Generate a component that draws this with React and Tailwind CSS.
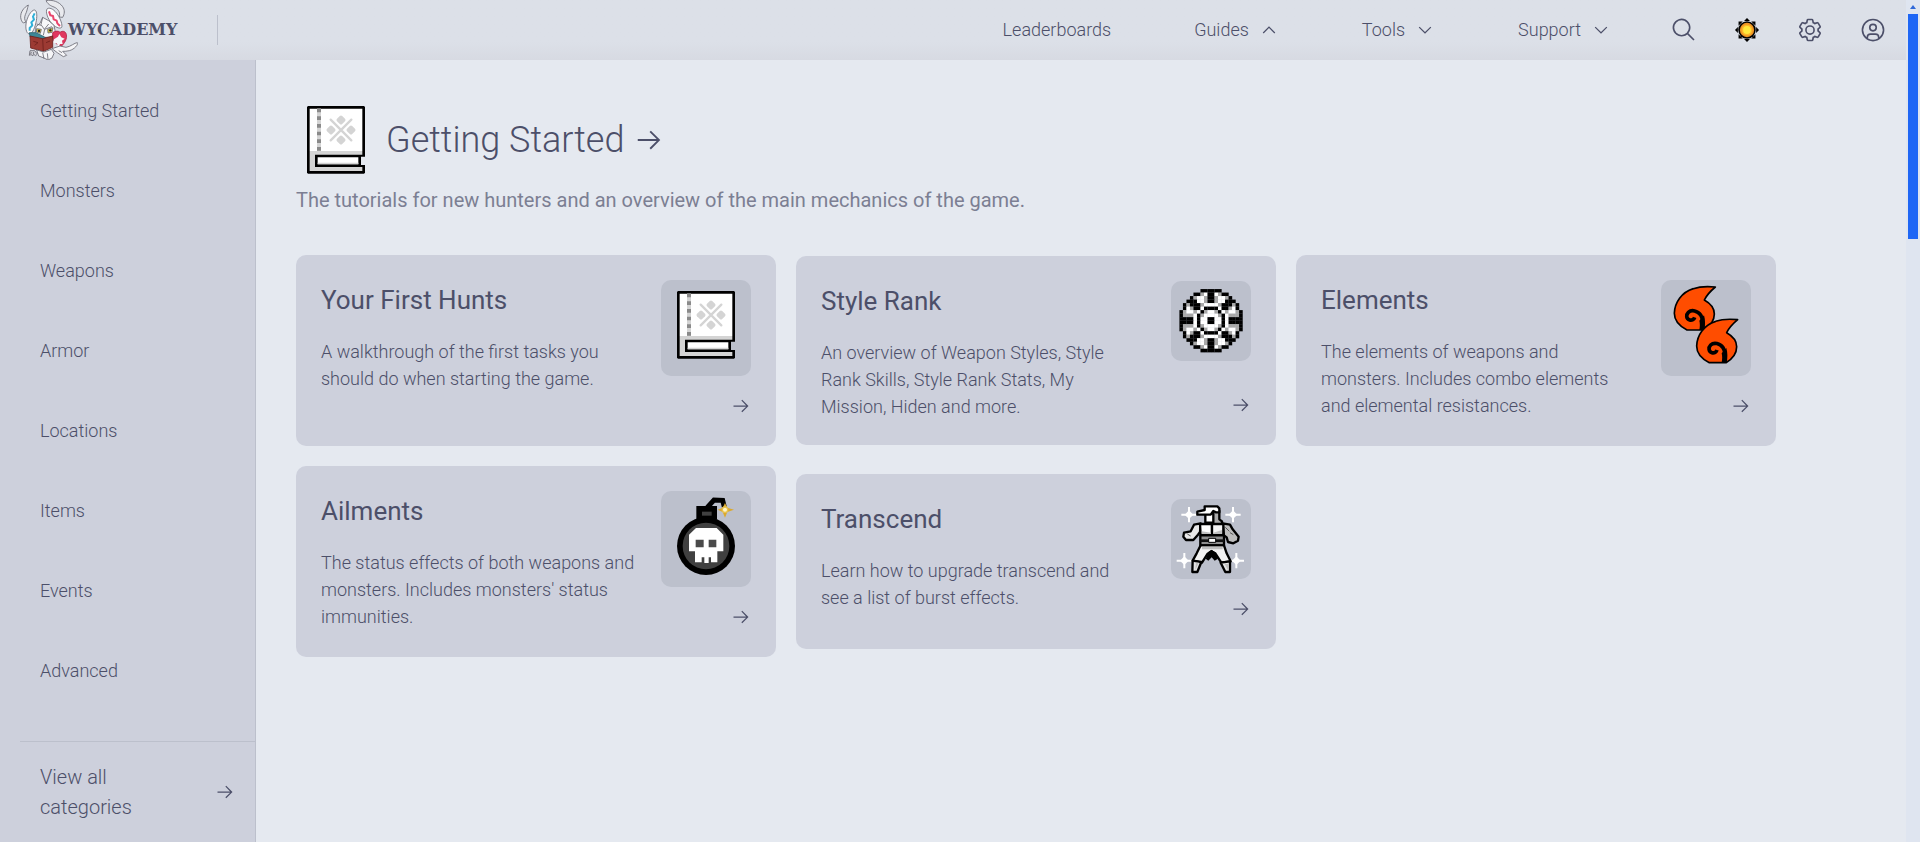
const ICON_PATHS = {
  arrow: ["M18 6 16.57 7.393 24.15 15 4 15 4 17 24.15 17 16.57 24.573 18 26 28 16 18 6z"],
  down: ["M16 22 6 12 7.4 10.6 16 19.2 24.6 10.6 26 12z"],
  up: ["M16 10 26 20 24.6 21.4 16 12.8 7.4 21.4 6 20z"],
  search: [
    "M29,27.5859l-7.5521-7.5521a11.0177,11.0177,0,1,0-1.4141,1.4141L27.5859,29ZM4,13a9,9,0,1,1,9,9A9.01,9.01,0,0,1,4,13Z",
  ],
  settings: [
    "M27,16.76c0-.25,0-.5,0-.76s0-.51,0-.77l1.92-1.68A2,2,0,0,0,29.3,11L26.94,7a2,2,0,0,0-1.73-1,2,2,0,0,0-.64.1l-2.43.82a11.35,11.35,0,0,0-1.31-.75l-.51-2.52a2,2,0,0,0-2-1.61H13.64a2,2,0,0,0-2,1.61l-.51,2.52a11.48,11.48,0,0,0-1.32.75L7.43,6.06A2,2,0,0,0,6.79,6,2,2,0,0,0,5.06,7L2.7,11a2,2,0,0,0,.41,2.51L5,15.24c0,.25,0,.5,0,.76s0,.51,0,.77L3.11,18.45A2,2,0,0,0,2.7,21L5.06,25a2,2,0,0,0,1.73,1,2,2,0,0,0,.64-.1l2.43-.82a11.35,11.35,0,0,0,1.31.75l.51,2.52a2,2,0,0,0,2,1.61h4.72a2,2,0,0,0,2-1.61l.51-2.52a11.48,11.48,0,0,0,1.32-.75l2.42.82a2,2,0,0,0,.64.1,2,2,0,0,0,1.73-1L29.3,21a2,2,0,0,0-.41-2.51ZM25.21,24l-3.43-1.16a8.86,8.86,0,0,1-2.71,1.57L18.36,28H13.64l-.71-3.55a9.36,9.36,0,0,1-2.7-1.57L6.79,24,4.43,20l2.72-2.4a8.9,8.9,0,0,1,0-3.13L4.43,12,6.79,8l3.43,1.16a8.86,8.86,0,0,1,2.71-1.57L13.64,4h4.72l.71,3.55a9.36,9.36,0,0,1,2.7,1.57L25.21,8,27.57,12l-2.72,2.4a8.9,8.9,0,0,1,0,3.13L27.57,20Z",
    "M16,22a6,6,0,1,1,6-6A5.94,5.94,0,0,1,16,22Zm0-10a3.91,3.91,0,0,0-4,4,3.91,3.91,0,0,0,4,4,3.91,3.91,0,0,0,4-4A3.91,3.91,0,0,0,16,12Z",
  ],
  user: [
    "M16,8a5,5,0,1,0,5,5A5,5,0,0,0,16,8Zm0,8a3,3,0,1,1,3-3A3.0034,3.0034,0,0,1,16,16Z",
    "M16,2A14,14,0,1,0,30,16,14.0158,14.0158,0,0,0,16,2ZM10,26.3765V25a3.0033,3.0033,0,0,1,3-3h6a3.0033,3.0033,0,0,1,3,3v1.3765a11.8989,11.8989,0,0,1-12,0Zm13.9925-1.4507A5.0016,5.0016,0,0,0,19,20H13a5.0016,5.0016,0,0,0-4.9925,4.9258,12,12,0,1,1,15.985,0Z",
  ],
};

function Icon({ name, className }) {
  return (
    <svg viewBox="0 0 32 32" fill="currentColor" aria-hidden="true" className={`shrink-0 ${className}`}>
      {ICON_PATHS[name].map((d) => (
        <path key={d} d={d} />
      ))}
    </svg>
  );
}

function SunIcon() {
  return (
    <svg viewBox="-40 -40 80 80" aria-hidden="true" className="size-[26px]">
      {[0, 90, 180, 270].map((a) => (
        <g key={a} transform={`rotate(${a})`}>
          <path d="M-9 -28 0 -37 9 -28z" />
          <path d="M13 -26h13v13z" />
        </g>
      ))}
      <circle r="27" />
      <circle r="22" fill="#ee9423" />
      <circle r="17" fill="#fbb52a" />
      <circle r="12" fill="#ffe93c" />
    </svg>
  );
}

function Logo() {
  return (
    <svg viewBox="30 0 174 180" aria-hidden="true" className="h-[60px] w-[58px] shrink-0" stroke="#6a6a74" strokeWidth="2.5" strokeLinejoin="round">
      <path fill="#e9eaee" d="M55 15C42 22 31 36 32 52c1 8 4 14 8 17l8-3c-5-6-5-14-2-22 5-10 6-18 9-29z" />
      <path fill="#e9eaee" d="M108 2c20-4 40 4 50 18 7 10 6 22 0 32l-10-1c3-12-2-22-12-28-10-5-20-6-28-21z" />
      <path fill="#fbfbfd" d="M74 30c6 2 8 14 5 32-3 18-11 38-19 40-9 1-14-12-12-30 2-19 16-43 26-42z" />
      <path fill="#fbfbfd" d="M112 26c9-5 22 4 31 18 9 13 15 32 12 38-6 6-21-1-31-13-11-13-19-36-12-43z" />
      <path fill="none" stroke="#2fb0d8" strokeWidth="6" d="M74 40l-5 10 3 9-8 8 3 9-8 8v8" />
      <path fill="none" stroke="#e8456c" strokeWidth="6" d="M117 34l4 12 8 2 2 10 9 4 2 8 8 8" />
      <path fill="#f7f7f9" d="M98 52l18 10 16 14 4 20-12 16-30 0-18-14 2-18 12-10z" />
      <path fill="none" d="M98 52l-5 22 10 14 13-16M80 72l13 4M104 88l-4 18M104 88l22-8" />
      <path fill="#d9c63c" d="M80 86l14 2-3 12-12-4zM113 88l16-5-3 14-12 2z" />
      <circle cx="87" cy="93" r="3.5" fill="#222" stroke="none" />
      <circle cx="121" cy="91" r="3.5" fill="#222" stroke="none" />
      <path fill="#3d8797" stroke="#2e6471" d="M58 98l20 0 20 10 10 6-8 4-40-8z" />
      <path fill="#e0375f" stroke="#b12748" d="M128 98c8-6 18-6 22-1 8-6 17-3 19 6 3 14-5 26-15 36-14-4-26-16-26-30z" />
      <path fill="#f7f7f9" stroke="none" d="M132 118l12-8 4-8 6 10 10 4-8 6 2 10-8 0-4 10-6-12-10-2z" />
      <path fill="#9c3a33" stroke="#6d1f1c" d="M60 108l38 8 30-8v34l-28 12-38-10z" />
      <path fill="none" stroke="#6d1f1c" d="M98 116l2 38M70 124l14 4-10 8M108 128l12-5" />
      <path fill="#f5f5f7" d="M80 150l22 6 22-8 8 12-6 14-12 6-12-6-16-6z" />
      <path fill="#f5f5f7" d="M126 146l24-8 18 4c14-2 26-14 34-14 4 4-8 20-24 24-8 2-14 2-20 2l12 12-10 4-18-12z" />
      <path fill="#d4d4da" d="M60 152h14l8 10-5 5-6-4-2 4-6-3-5 2z" />
      <path fill="none" d="M98 158l4 18M112 160l2 18M146 152l10 6M64 156l-2 6M71 156l-1 6" />
    </svg>
  );
}

function BookArt() {
  const petals = [[102, 42], [102, 102], [72, 72], [132, 72]];
  return (
    <svg viewBox="-33 -18 240 240" aria-hidden="true" className="size-20">
      <path fill="#000" d="M3 0h168l3 3v149h-12v25h12v23l-3 3H3l-3-3V3z" />
      <path fill="#fff" d="M8 8h158v127H8z" />
      <path fill="#d4d4d4" d="M8 135h158v11H24v37h142v12H8z" />
      <path fill="#fff" d="M32 154h122v21H32z" />
      <path fill="#d4d4d4" d="M32 170h122v5H32z" />
      <path fill="#d4d4d4" d="M30 8h12v127H30z" />
      <path stroke="#8a8a8a" strokeWidth="12" strokeDasharray="11 12" d="M36 8v127" />
      <path stroke="#d4d4d4" strokeWidth="7" strokeLinecap="round" d="M71 41l62 62M133 41l-62 62" />
      {petals.map(([x, y]) => (
        <rect key={`${x}-${y}`} x={x - 11} y={y - 11} width="22" height="22" rx="5" fill="#d4d4d4" transform={`rotate(45 ${x} ${y})`} />
      ))}
    </svg>
  );
}

const WHEEL = [
  "......KKK",
  "....KKGWK",
  "...KGWWGK",
  "..KKKWWGK",
  ".KGKKKGWW",
  ".KWGKKWKK",
  "KGWWGWKGW",
  "KGGGWKGWW",
  "KKKKWKWWK",
];
const WHEEL_COLORS = { K: "#000", W: "#fff", G: "#a8a8a8" };

function WheelArt() {
  const cells = [];
  for (let y = 0; y < 18; y++) {
    for (let x = 0; x < 18; x++) {
      const c = WHEEL[y < 9 ? y : 17 - y][x < 9 ? x : 17 - x];
      if (c !== ".") cells.push(<rect key={`${x}-${y}`} x={x} y={y} width="1.04" height="1.04" fill={WHEEL_COLORS[c]} />);
    }
  }
  return (
    <svg viewBox="-2.4 -2.3 22.8 22.8" aria-hidden="true" className="size-20">
      {cells}
    </svg>
  );
}

const FLAME = "M226 66C205 64 180 64 160 71 125 82 104 112 103 145c0 22 14 38 38 50h50c20-12 32-28 32-48 0-18-14-33-30-42 8-17 20-28 33-39z";
const CURL = "M187 194c2-20 2-34-5-44-9-13-27-17-37-8-8 8-6 20 4 23 7 2 13-2 15-8";

function Flame() {
  return (
    <>
      <path d={FLAME} fill="#ff4d00" stroke="#000" strokeWidth="5" strokeLinejoin="round" />
      <path d={CURL} fill="none" stroke="#000" strokeWidth="11" />
      <path d="M178 195c2-10 2-20 0-28l14-16c4 14 4 30 1 44z" />
    </>
  );
}

function FlamesArt() {
  return (
    <svg viewBox="78 60 240 240" aria-hidden="true" className="size-20">
      <Flame />
      <g transform="translate(67 98)">
        <Flame />
      </g>
    </svg>
  );
}

function BombArt() {
  return (
    <svg viewBox="78 78 240 240" aria-hidden="true" className="size-20">
      <path fill="none" stroke="#000" strokeWidth="15" d="M202 112l20-22 26 1 5 20" />
      <path fill="#000" d="M169 108h62v40h-62z" />
      <circle cx="198" cy="228" r="87" />
      <circle cx="198" cy="228" r="70" fill="#404040" />
      <path fill="#404040" d="M186 125h29v12h-29z" />
      <path fill="#fff" d="M168 174h62l20 20v50h-18v33h-19v-15h-7v17h-13v-17h-8v15h-20v-33h-18v-50z" />
      <path fill="#4a4a4a" d="M167 209h24v23h-24zM206 209h23v23h-23z" />
      <path fill="#dba92e" d="M255 99l7 14 20 6-20 7-7 17-7-17-15-7 15-6z" />
      <circle cx="255" cy="119" r="10" fill="#e8c24d" />
      <circle cx="255" cy="119" r="6" fill="#fff6c8" />
    </svg>
  );
}

function FighterArt() {
  const sparks = [[117, 104], [249, 104], [103, 242], [259, 242]];
  return (
    <svg viewBox="63 57 240 240" aria-hidden="true" className="size-20" strokeLinejoin="round">
      {sparks.map(([x, y]) => (
        <g key={`${x}-${y}`} fill="#fff">
          <path d={`M${x - 3} ${y - 23}h6v46h-6zM${x - 23} ${y - 3}h46v6h-46z`} />
          <path d={`M${x} ${y - 13}l13 13-13 13-13-13z`} />
        </g>
      ))}
      <g stroke="#000" strokeWidth="7">
        <path fill="#a9a9a9" d="M188 92h20v26l8 6v14h-28z" />
        <path fill="#fff" d="M166 100h24v28h-24z" />
        <path fill="#fff" d="M164 90V79h38l6 6v12h-10l-8-4-8 11h-40v-9z" />
        <path fill="#bdbdbd" d="M218 130l22 4 8 14 18 22-2 12-14 8-16-4-4-14-8-6z" />
        <path fill="#e8e8e8" d="M152 130l-20 4-10 20-20 4-2 12 8 10h22l14-16 6-8z" />
        <path fill="#fff" d="M150 132h36v33h-34z" />
        <path fill="#f4f4f4" d="M186 132h34v33h-34z" />
        <path fill="#8e8e8e" d="M151 166h71v30h-71z" />
        <path fill="#f2f2f2" d="M152 196h70l8 24 12 24-28 4-18-28-12-6-12 8-16 26-28-6 12-22z" />
        <path fill="#e4e4e4" d="M128 242l26 4-12 30h-15zM212 248l28-4v32h-14z" />
      </g>
      <path fill="#000" d="M176 216l9-7 9 7 10 20-10 6-9-10-10 10-8-6z" />
      <path fill="#111" d="M151 178h71v8h-71z" />
      <path fill="#fff" stroke="#000" strokeWidth="3" d="M176 175h21v12h-21z" />
      <path fill="#c0c0c0" d="M155 154l28 4v4h-28zM190 158l26-8v12h-26zM156 200h62v8h-62zM138 248h8l-10 22zM224 252h10v18z" />
      <path fill="none" stroke="#555" strokeWidth="3" d="M226 142l12 12M240 158l10 6M112 162l10 6" />
    </svg>
  );
}

const CATEGORIES = ["Getting Started", "Monsters", "Weapons", "Armor", "Locations", "Items", "Events", "Advanced"];

const MENUS = [
  { label: "Guides", icon: "up" },
  { label: "Tools", icon: "down" },
  { label: "Support", icon: "down" },
];

const CARDS = [
  { title: "Your First Hunts", text: "A walkthrough of the first tasks you should do when starting the game.", Art: BookArt },
  {
    title: "Style Rank",
    text: "An overview of Weapon Styles, Style Rank Skills, Style Rank Stats, My Mission, Hiden and more.",
    Art: WheelArt,
    compact: true,
  },
  {
    title: "Elements",
    text: "The elements of weapons and monsters. Includes combo elements and elemental resistances.",
    Art: FlamesArt,
  },
  {
    title: "Ailments",
    text: "The status effects of both weapons and monsters. Includes monsters' status immunities.",
    Art: BombArt,
  },
  { title: "Transcend", text: "Learn how to upgrade transcend and see a list of burst effects.", Art: FighterArt, compact: true },
];

function Header() {
  return (
    <header className="flex h-[60px] shrink-0 items-center bg-linear-to-b from-[#dce0e8] from-70% to-[#d7dae2] px-5 text-lg">
      <a href="#home" className="flex items-center">
        <Logo />
        <span className="-ml-[10px] font-['DejaVu_Serif',serif] text-base font-bold">WYCADEMY</span>
      </a>
      <span className="ml-10 h-[30px] w-px bg-[#bcc0cc]" />
      <nav className="ml-auto flex items-center gap-[83px]">
        <a href="#leaderboards">Leaderboards</a>
        {MENUS.map(({ label, icon }) => (
          <button key={label} type="button" className="flex items-center gap-[10px]">
            {label}
            <Icon name={icon} className="size-5" />
          </button>
        ))}
      </nav>
      <div className="ml-[60px] flex items-center gap-[37px]">
        <button type="button" aria-label="Search">
          <Icon name="search" className="size-[26px]" />
        </button>
        <button type="button" aria-label="Theme">
          <SunIcon />
        </button>
        <button type="button" aria-label="Settings">
          <Icon name="settings" className="size-[26px]" />
        </button>
        <button type="button" aria-label="Account">
          <Icon name="user" className="size-[26px]" />
        </button>
      </div>
    </header>
  );
}

function Sidebar() {
  return (
    <aside className="flex w-64 shrink-0 flex-col border-r border-[#bcc0cc] bg-[#cdd0dc] pt-[11px]">
      <nav className="flex flex-col">
        {CATEGORIES.map((c) => (
          <a key={c} href={`#${c}`} className="flex h-20 items-center pl-10 text-lg">
            {c}
          </a>
        ))}
      </nav>
      <a
        href="#categories"
        className="mt-auto ml-5 flex h-[101px] items-center justify-between border-t border-[#bcc0cc] px-5 text-xl leading-[30px]"
      >
        <span className="w-28">View all categories</span>
        <Icon name="arrow" className="size-5" />
      </a>
    </aside>
  );
}

function Card({ title, text, Art, compact }) {
  return (
    <a href={`#${title}`} className="flex justify-between rounded-[10px] bg-[#cdd0dc] p-[25px]">
      <div className="max-w-[315px]">
        <h2 className="text-[26px] leading-10 font-normal">{title}</h2>
        <p className="mt-[18px] text-lg leading-[27px]">{text}</p>
      </div>
      <div className="flex flex-col items-end justify-between gap-5 pb-[5px]">
        <div className={compact ? "rounded-[10px] bg-[#bcc0cc]" : "h-24 rounded-[10px] bg-[#bcc0cc] p-[5px]"}>
          <Art />
        </div>
        <Icon name="arrow" className="size-5" />
      </div>
    </a>
  );
}

function Scrollbar() {
  return (
    <div aria-hidden="true" className="flex w-[14px] shrink-0 flex-col items-center bg-[#dfe5f0]">
      <svg viewBox="0 0 14 14" className="size-[14px]">
        <path d="M4 9 7 5l3 4z" fill="#2f68d8" />
      </svg>
      <div className="h-[225px] w-[10px] bg-[#1e66f5]" />
    </div>
  );
}

export default function App() {
  return (
    <div className="flex min-h-screen bg-[#e5e9f0] font-['Roboto',sans-serif] font-light text-[#4c4f69]">
      <div className="flex min-w-0 flex-1 flex-col">
        <Header />
        <div className="flex flex-1">
          <Sidebar />
          <main className="min-w-0 flex-1 p-10">
            <a href="#getting-started" className="flex items-center gap-[10px]">
              <BookArt />
              <h1 className="text-4xl">Getting Started</h1>
              <Icon name="arrow" className="size-[30px]" />
            </a>
            <p className="mt-[5px] mb-10 text-xl leading-[30px] font-normal text-[#7c7f93]">
              The tutorials for new hunters and an overview of the main mechanics of the game.
            </p>
            <div className="grid max-w-[1480px] grid-cols-3 items-center gap-5">
              {CARDS.map((card) => (
                <Card key={card.title} {...card} />
              ))}
            </div>
          </main>
        </div>
      </div>
      <Scrollbar />
    </div>
  );
}
